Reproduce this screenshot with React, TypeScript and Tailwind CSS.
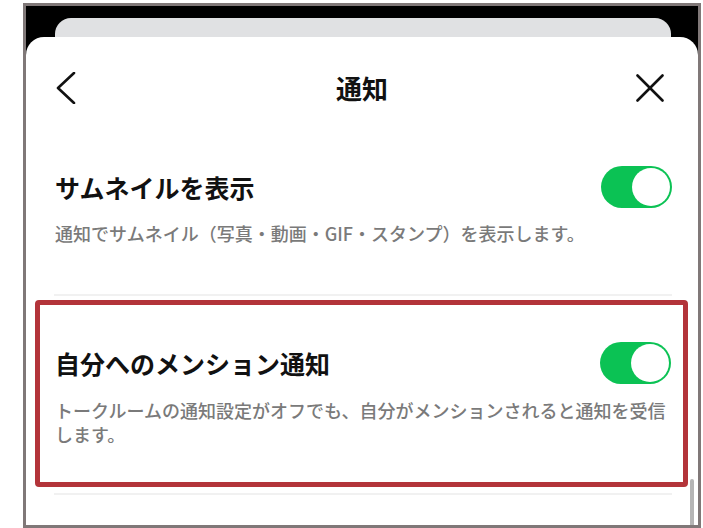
import React from "react";

const FONT = { fontFamily: '"Noto Sans CJK JP", "Noto Sans", sans-serif' };

function Toggle() {
  return (
    <div className="w-[71px] h-[42px] rounded-full bg-[#0bc254] flex items-center justify-end pr-[2px] shrink-0">
      <div className="w-[38px] h-[38px] rounded-full bg-white" />
    </div>
  );
}

export default function App() {
  return (
    <div className="w-[703px] h-[528px] bg-white overflow-hidden" style={FONT}>
      <div className="ml-[23px] mt-[3px] w-[678px] h-[525px] border-[3px] border-[#807878] bg-black flex flex-col">
        <div className="ml-[29px] mt-[12px] w-[616px] h-[40px] rounded-t-[16px] bg-[#e0e1e3] shrink-0" />
        <div className="relative -mt-[21px] flex-1 bg-white rounded-t-[18px] flex flex-col">
          <div className="h-[102px] flex items-center justify-between pl-[30px] pr-[34px] relative shrink-0">
            <svg width="20" height="32" viewBox="0 0 20 32" className="shrink-0">
              <polyline points="18,1 2,16 18,31" fill="none" stroke="#111" strokeWidth="2.6" strokeLinecap="round" strokeLinejoin="round" />
            </svg>
            <div className="absolute left-0 right-0 text-center text-[26px] font-bold text-[#111] leading-none pointer-events-none">通知</div>
            <svg width="28" height="28" viewBox="0 0 28 28" className="shrink-0">
              <line x1="1.5" y1="1.5" x2="26.5" y2="26.5" stroke="#111" strokeWidth="2.6" strokeLinecap="round" />
              <line x1="26.5" y1="1.5" x2="1.5" y2="26.5" stroke="#111" strokeWidth="2.6" strokeLinecap="round" />
            </svg>
          </div>

          <div className="pl-[29px] pr-[26px] pt-[27px] pb-[49px]">
            <div className="flex items-center justify-between">
              <div className="text-[25px] font-bold text-[#111] leading-[34px]">サムネイルを表示</div>
              <Toggle />
            </div>
            <div className="mt-[13px] text-[18px] leading-[24px] font-medium text-[#7a7a7a]">
              通知でサムネイル（写真・動画・GIF・スタンプ）を表示します。
            </div>
          </div>
          <div className="ml-[28px] mr-[26px] h-[2px] bg-[#f1f1f1]" />

          <div className="ml-[9px] mt-[4px] w-[653px] h-[187px] border-[5px] border-[#b3343a] rounded-[4px] pl-[15px] pr-[12px] pt-[37px]">
            <div className="flex items-center justify-between">
              <div className="text-[25px] font-bold text-[#111] leading-[34px]">自分へのメンション通知</div>
              <Toggle />
            </div>
            <div className="mt-[14px] text-[18px] leading-[24px] font-medium text-[#7a7a7a]">
              トークルームの通知設定がオフでも、自分がメンションされると通知を受信します。
            </div>
          </div>
          <div className="ml-[28px] mr-[26px] mt-[6px] h-[2px] bg-[#f1f1f1]" />

          <div className="absolute right-[4px] bottom-0 w-[4px] h-[46px] rounded-t-full bg-[#b5b5b5]" />
        </div>
      </div>
    </div>
  );
}
